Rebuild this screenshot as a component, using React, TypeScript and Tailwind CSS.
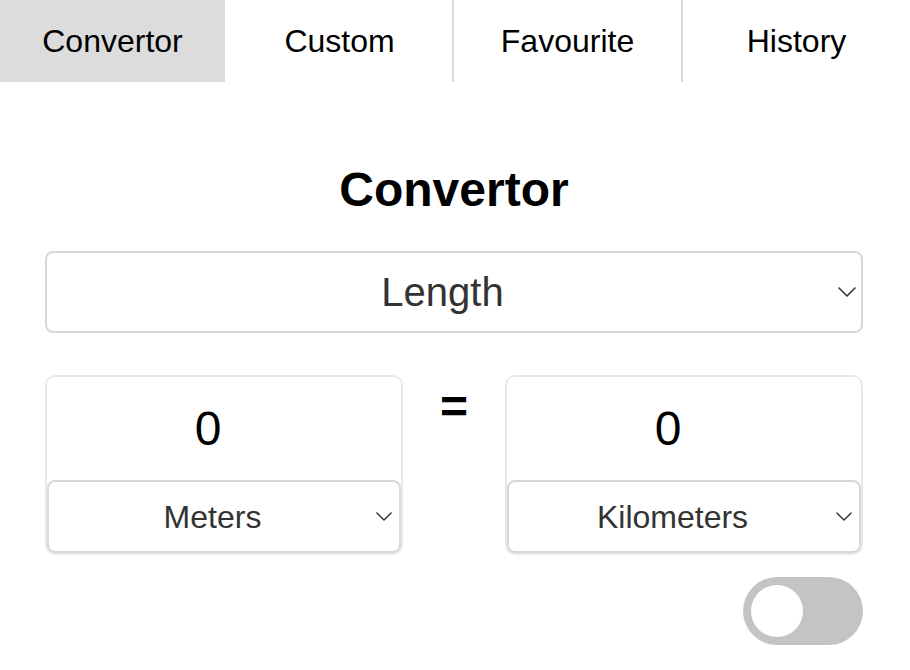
import { useState } from 'react';

const tabs = [
  { label: 'Convertor', w: 'w-[227px] border-r-2 border-white' },
  { label: 'Custom', w: 'w-[227px] border-r-2 border-[#d9d9d9]' },
  { label: 'Favourite', w: 'w-[229px] border-r-2 border-[#d9d9d9]' },
  { label: 'History', w: 'flex-1' },
];

function Chevron({ w }: { w: number }) {
  return (
    <svg width={w} height={w / 2 + 1} viewBox="0 0 18 10" fill="none">
      <path d="M1 1l8 8 8-8" stroke="#333" strokeWidth="1.6" strokeLinecap="round" strokeLinejoin="round" />
    </svg>
  );
}

function UnitBox({ value, unit }: { value: string; unit: string }) {
  return (
    <div className="flex flex-col border-2 border-[#e9e9e9] rounded-[10px]">
      <div className="h-[103px] flex items-center justify-center pr-[32px] text-[48px] text-black">
        {value}
      </div>
      <div className="h-[73px] flex items-center border-2 border-[#d8d8d8] rounded-lg bg-white">
        <span className="flex-1 text-center text-[32px] text-[#333]">{unit}</span>
        <span className="pr-[7px] flex items-center">
          <Chevron w={16} />
        </span>
      </div>
    </div>
  );
}

export default function App() {
  const [active, setActive] = useState(0);
  const [on, setOn] = useState(false);

  return (
    <div className="w-[910px] h-[670px] bg-white overflow-hidden font-['Liberation_Sans',Arial,sans-serif]">
      {/* Tabs */}
      <div className="flex h-[82px]">
        {tabs.map((tab, i) => (
          <button
            key={tab.label}
            onClick={() => setActive(i)}
            className={`${tab.w} flex items-center justify-center text-[32px] text-black ${
              i === active ? 'bg-[#dcdcdc]' : 'bg-white'
            }`}
          >
            {tab.label}
          </button>
        ))}
      </div>

      <div className="pl-[45px] pr-[47px]">
        <h1 className="mt-[80px] text-center text-[48px] leading-[56px] font-bold text-black">Convertor</h1>

        {/* Category select */}
        <div className="mt-[33px] h-[82px] flex items-center border-2 border-[#d8d8d8] rounded-lg">
          <span className="flex-1 text-center text-[40px] text-[#333]">Length</span>
          <span className="pr-[5px] flex items-center">
            <Chevron w={18} />
          </span>
        </div>

        {/* Units */}
        <div className="mt-[42px] grid grid-cols-[358px_1fr_358px]">
          <UnitBox value="0" unit="Meters" />
          <div className="flex justify-center pt-[8px] text-[48px] leading-none font-bold text-black">=</div>
          <UnitBox value="0" unit="Kilometers" />
        </div>

        {/* Toggle */}
        <div className="mt-[22px] flex justify-end">
          <button
            onClick={() => setOn(v => !v)}
            className={`w-[120px] h-[68px] rounded-full p-[8px] flex ${on ? 'bg-[#4caf50] justify-end' : 'bg-[#c4c4c4] justify-start'}`}
          >
            <span className="w-[52px] h-[52px] rounded-full bg-white" />
          </button>
        </div>
      </div>
    </div>
  );
}
